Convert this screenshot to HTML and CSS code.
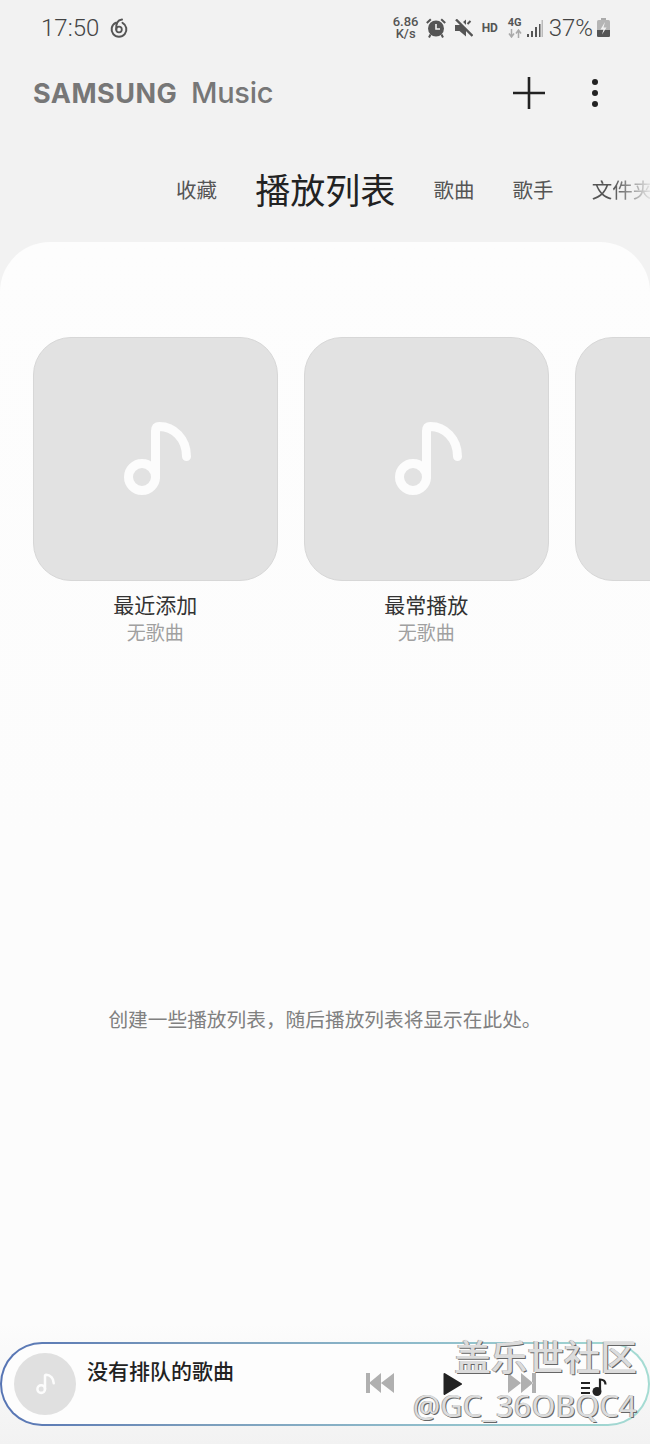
FILE: index.html
```html
<!DOCTYPE html>
<html lang="zh">
<head>
<meta charset="utf-8">
<title>Samsung Music</title>
<link rel="stylesheet" href="styles.css">
</head>
<body>
<div class="page">
  <div class="status">
    <div class="status-left">
      <span class="clock">17:50</span>
      <svg class="ic-netease" viewBox="0 0 20 20"><path d="M6.500 4.800A7.400 7.400 0 1 0 13.500 4.800" fill="none" stroke="#555" stroke-width="2" stroke-linecap="round"/><circle cx="10" cy="11.500" r="2.800" fill="none" stroke="#555" stroke-width="1.800"/><path d="M7.300 11.500C6.800 6 8.800 2 13 1.500" fill="none" stroke="#555" stroke-width="2" stroke-linecap="round"/></svg>
    </div>
    <div class="status-right">
      <span class="speed">6.86<br>K/s</span>
      <svg class="ic-alarm" viewBox="0 0 20 20"><circle cx="10" cy="10.500" r="8" fill="#555"/><path d="M10 6v5h4" fill="none" stroke="#f2f2f2" stroke-width="1.600"/><path d="M0.800 5 4.800 1.200M19.200 5 15.200 1.200M4.500 16.500 3 19.500M15.500 16.500 17 19.500" stroke="#555" stroke-width="2" fill="none"/></svg>
      <svg class="ic-mute" viewBox="0 0 18 18"><path d="M0 6h4.500L11 .5v17L4.500 12H0z" fill="#555"/><path d="M3 0 18 15" stroke="#f2f2f2" stroke-width="3"/><path d="M1 .5 17.500 17" stroke="#555" stroke-width="2.400"/><path d="M12.500 5 15.500 2" stroke="#555" stroke-width="2"/></svg>
      <span class="hd">HD</span>
      <span class="net"><span class="net-4g">4G</span><svg class="ic-arrows" viewBox="0 0 14 9"><path d="M3.500 0v7M1 4.500 3.500 8 6 4.500" fill="none" stroke="#aaa" stroke-width="1.500"/><path d="M10.500 9V2M8 4.500 10.500 1 13 4.500" fill="none" stroke="#aaa" stroke-width="1.500"/></svg></span>
      <svg class="ic-signal" viewBox="0 0 17 17"><path d="M1 14h2v3H1zM5 11h2v6H5zM9 7h2v10H9z" fill="#555"/><path d="M13 4h1.500v13H13z" fill="#555"/><path d="M15.500 0h1.500v17h-1.500z" fill="#bbb"/></svg>
      <span class="pct">37%</span>
      <svg class="ic-batt" viewBox="0 0 13 19"><path d="M4 0h5v2H4z" fill="#aaa"/><rect y="2" width="13" height="17" rx="1.500" fill="#b5b5b5"/><path d="M0 12h13v5.500a1.500 1.500 0 0 1-1.500 1.500h-10A1.500 1.500 0 0 1 0 17.500z" fill="#555"/><path d="M8 4 3.500 11.500h3L5 16.500l4.500-7h-3z" fill="#f2f2f2"/></svg>
    </div>
  </div>

  <header class="appbar">
    <div class="logo"><span class="logo-brand">SAMSUNG</span><span class="logo-music">Music</span></div>
    <div class="actions">
      <svg class="ic-plus" viewBox="0 0 32 32"><path d="M16 0v32M0 16h32" stroke="#222" stroke-width="2.600" fill="none"/></svg>
      <svg class="ic-more" viewBox="0 0 6 28"><circle cx="3" cy="3" r="3" fill="#222"/><circle cx="3" cy="14" r="3" fill="#222"/><circle cx="3" cy="25" r="3" fill="#222"/></svg>
    </div>
  </header>

  <nav class="tabs">
    <span class="tab">收藏</span>
    <span class="tab tab-active">播放列表</span>
    <span class="tab">歌曲</span>
    <span class="tab">歌手</span>
    <span class="tab tab-fade">文件夹</span>
  </nav>

  <main class="sheet">
    <div class="cards">
      <div class="card">
        <div class="cover">
          <svg class="note" viewBox="120 420 71 78"><circle cx="142" cy="477" r="13.500" fill="none" stroke="#fcfcfc" stroke-width="9"/><path d="M155.500 477V431c0-3 1-4.500 4-4.500 14 0 27 12 27 30" fill="none" stroke="#fcfcfc" stroke-width="9" stroke-linecap="round" stroke-linejoin="round"/></svg>
        </div>
        <div class="card-title">最近添加</div>
        <div class="card-sub">无歌曲</div>
      </div>
      <div class="card">
        <div class="cover">
          <svg class="note" viewBox="120 420 71 78"><circle cx="142" cy="477" r="13.500" fill="none" stroke="#fcfcfc" stroke-width="9"/><path d="M155.500 477V431c0-3 1-4.500 4-4.500 14 0 27 12 27 30" fill="none" stroke="#fcfcfc" stroke-width="9" stroke-linecap="round" stroke-linejoin="round"/></svg>
        </div>
        <div class="card-title">最常播放</div>
        <div class="card-sub">无歌曲</div>
      </div>
      <div class="card">
        <div class="cover"></div>
      </div>
    </div>
    <p class="empty">创建一些播放列表，随后播放列表将显示在此处。</p>

    <div class="player">
      <div class="thumb">
        <svg class="thumb-note" viewBox="120 420 71 78"><circle cx="142" cy="477" r="13.500" fill="none" stroke="#fcfcfc" stroke-width="9"/><path d="M155.500 477V431c0-3 1-4.500 4-4.500 14 0 27 12 27 30" fill="none" stroke="#fcfcfc" stroke-width="9" stroke-linecap="round"/></svg>
      </div>
      <div class="track">没有排队的歌曲</div>
      <div class="controls">
        <svg class="ic-prev" viewBox="0 0 28 20"><path d="M0 0h4v20H0zM15 0v20L3 10zM28 0v20L15 10z" fill="#b0b0b0"/></svg>
        <svg class="ic-play" viewBox="0 0 19 22"><path d="M1.500 1 18 11 1.500 21z" fill="#222" stroke="#222" stroke-width="2" stroke-linejoin="round"/></svg>
        <svg class="ic-next" viewBox="0 0 28 20"><path d="M24 0h4v20h-4zM13 0v20l12-10zM0 0v20l13-10z" fill="#b0b0b0"/></svg>
        <svg class="ic-queue" viewBox="0 0 26 19"><path d="M0 5h9v2H0zM0 10h9v2H0zM0 15h9v2H0z" fill="#222"/><circle cx="16" cy="14.500" r="4.500" fill="#222"/><path d="M19 14V2.500c3 0 5.500 1.500 5.500 5" fill="none" stroke="#222" stroke-width="2.200"/></svg>
      </div>
    </div>
  </main>

  <div class="watermark">
    <div class="wm-cn">盖乐世社区</div>
    <div class="wm-id">@GC_36OBQC4</div>
  </div>
</div>
</body>
</html>
```

FILE: styles.css
```css
* { box-sizing: border-box; }
html, body { margin: 0; padding: 0; }
body { width: 650px; height: 1444px; overflow: hidden; background: #f2f2f2; font-family: "Noto Sans CJK SC", "Noto Sans", sans-serif; }
.page { position: relative; width: 650px; height: 1444px; display: flex; flex-direction: column; background: #f2f2f2; overflow: hidden; }

.status { height: 55px; flex: none; display: flex; justify-content: space-between; align-items: center; padding: 0 40px 0 41px; color: #555; font-family: Roboto, sans-serif; }
.status-left { display: flex; align-items: center; gap: 10px; }
.clock { font-size: 24px; font-weight: 300; color: #444; }
.ic-netease { width: 20px; height: 20px; }
.status-right { display: flex; align-items: center; }
.speed { font-size: 13px; font-weight: 500; line-height: 12px; text-align: center; width: 26px; color: #555; margin-left: -1px; }
.ic-alarm { width: 20px; height: 20px; margin-left: 7px; }
.ic-mute { width: 18px; height: 18px; margin-left: 9px; }
.hd { font-size: 12px; font-weight: 700; margin-left: 9px; width: 17px; }
.net { display: flex; flex-direction: column; align-items: center; width: 14px; margin-left: 9px; }
.net-4g { font-size: 11px; font-weight: 700; line-height: 10px; }
.ic-arrows { width: 14px; height: 9px; margin-top: 1px; }
.ic-signal { width: 17px; height: 17px; margin-left: 4px; margin-top: 2px; }
.pct { font-size: 24px; font-weight: 300; margin-left: 6px; color: #444; }
.ic-batt { width: 13px; height: 19px; margin-left: 4px; }

.appbar { height: 75px; flex: none; display: flex; justify-content: space-between; align-items: center; padding: 0 52px 0 33px; }
.logo { display: flex; align-items: baseline; color: #777; padding-top: 2px; }
.logo-brand { font-family: Inter, sans-serif; font-weight: 700; font-size: 27px; letter-spacing: 0.500px; line-height: 30px; width: 143px; white-space: nowrap; }
.logo-music { font-family: Inter, sans-serif; font-weight: 500; font-size: 29px; line-height: 30px; margin-left: 15px; letter-spacing: -0.300px; }
.actions { display: flex; align-items: center; gap: 47px; }
.ic-plus { width: 32px; height: 32px; }
.ic-more { width: 6px; height: 28px; }

.tabs { height: 112px; flex: none; display: flex; align-items: center; gap: 38.200px; padding: 6px 0 0 176px; overflow: hidden; white-space: nowrap; color: #555; }
.tab { font-size: 20.500px; line-height: 30px; flex: none; }
.tab-active { font-size: 35px; line-height: 50px; color: #222; }
.tab-fade { -webkit-mask-image: linear-gradient(90deg, #000 35%, rgba(0,0,0,.1) 95%); mask-image: linear-gradient(90deg, #000 35%, rgba(0,0,0,.1) 95%); }

.sheet { flex: 1; display: flex; flex-direction: column; position: relative; border-radius: 50px 50px 0 0; background: linear-gradient(180deg, #fdfdfd 0, #fcfcfc 50%, #fcfcfc 90%, #f2f2f2 100%); padding-top: 95px; }
.cards { display: flex; gap: 26.500px; padding-left: 33px; overflow: hidden; }
.card { flex: none; width: 244.500px; display: flex; flex-direction: column; align-items: center; }
.cover { width: 244.500px; height: 244px; border-radius: 38px; background: #e2e2e2; border: 1px solid #d7d7d7; display: flex; align-items: center; justify-content: center; }
.note { width: 71px; height: 78px; }
.card-title { font-size: 21px; line-height: 28px; color: #333; margin-top: 9px; }
.card-sub { font-size: 19px; line-height: 26px; color: #a0a0a0; margin-top: 1px; }
.empty { margin: 359px 0 0; text-align: center; font-size: 19.700px; line-height: 30px; color: #808080; }

.player { position: absolute; left: 0; right: 0; top: 1100px; height: 84px; border: 2px solid transparent; border-radius: 42px; background: linear-gradient(#fdfdfd, #fdfdfd) padding-box, linear-gradient(90deg, #5674b4 0%, #7a9cbc 30%, #8fbccb 65%, #a5dcd3 100%) border-box; display: flex; padding: 9px 0 0 12px; }
.thumb { width: 62px; height: 62px; border-radius: 50%; background: #e0e0e0; display: flex; align-items: center; justify-content: center; flex: none; }
.thumb-note { width: 20px; height: 22px; }
.track { font-size: 21px; font-weight: 500; line-height: 30px; color: #222; margin-left: 11px; margin-top: 2px; width: 148px; white-space: nowrap; }
.controls { position: absolute; inset: 0; pointer-events: none; }
.ic-prev, .ic-play, .ic-next, .ic-queue { position: absolute; }
.ic-prev { left: 364px; top: 29px; width: 28px; height: 20px; }
.ic-play { left: 441px; top: 29px; width: 19px; height: 22px; }
.ic-next { left: 506px; top: 29px; width: 28px; height: 20px; }
.ic-queue { left: 579px; top: 33px; width: 26px; height: 19px; }

.watermark { position: absolute; right: 13px; top: 1334px; display: flex; flex-direction: column; align-items: flex-end; color: #dcdcdc; text-shadow: 1px 1px 0 #666, -1px 0 0 #aaa; }
.wm-cn { font-size: 36.500px; font-weight: 500; line-height: 44px; }
.wm-id { font-family: "Noto Sans", sans-serif; font-size: 30.400px; line-height: 36px; margin-top: 10px; letter-spacing: 0.300px; }
```
